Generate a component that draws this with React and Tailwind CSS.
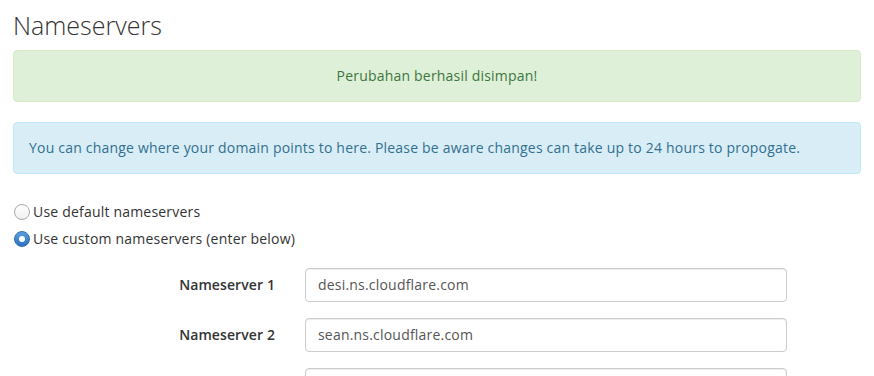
import React from "react";

function Radio({ checked }) {
  if (checked) {
    return (
      <span className="inline-flex h-[16px] w-[16px] shrink-0 items-center justify-center rounded-full border border-[#2f6fb0] bg-gradient-to-b from-[#5a9ee0] to-[#2b73c0]">
        <span className="h-[6px] w-[6px] rounded-full bg-white" />
      </span>
    );
  }
  return (
    <span className="inline-block h-[16px] w-[16px] shrink-0 rounded-full border border-[#a9a9a9] bg-gradient-to-b from-white to-[#f0f0f0]" />
  );
}

function Row({ label, value }) {
  return (
    <div className="flex items-center">
      <label className="w-[262px] text-right text-[14px] font-semibold tracking-[0.1px] text-[#333]">{label}</label>
      <div className="ml-[30px] flex h-[34px] w-[482px] items-center rounded-[4px] border border-[#ccc] bg-white px-[12px] text-[14px] tracking-[0.2px] text-[#555] shadow-[inset_0_1px_1px_rgba(0,0,0,0.075)]">
        {value}
      </div>
    </div>
  );
}

export default function App() {
  return (
    <div className="h-[376px] w-[874px] overflow-hidden bg-white px-[13px] pt-[10px] text-[14px] leading-[20px] tracking-[0.2px] text-[#333]" style={{ fontFamily: '"Open Sans", sans-serif' }}>
      <h1 className="m-0 text-[25px] font-light leading-[30px] tracking-[0px] text-[#333]" style={{ fontFamily: '"Open Sans", sans-serif' }}>
        Nameservers
      </h1>
      <div className="mt-[10px] w-[848px] rounded-[4px] border border-[#d6e9c6] bg-[#dff0d8] p-[15px] text-center text-[#3c763d]">
        Perubahan berhasil disimpan!
      </div>
      <div className="mt-[20px] w-[848px] rounded-[4px] border border-[#bce8f1] bg-[#d9edf7] p-[15px] text-[#31708f]">
        You can change where your domain points to here. Please be aware changes can take up to 24 hours to propogate.
      </div>
      <div className="mt-[28px] flex flex-col gap-[7px]">
        <div className="flex items-center gap-[3px] pl-[1px]">
          <Radio />
          <span>Use default nameservers</span>
        </div>
        <div className="flex items-center gap-[3px] pl-[1px]">
          <Radio checked />
          <span>Use custom nameservers (enter below)</span>
        </div>
      </div>
      <div className="mt-[19px] flex flex-col gap-[16px]">
        <Row label="Nameserver 1" value="desi.ns.cloudflare.com" />
        <Row label="Nameserver 2" value="sean.ns.cloudflare.com" />
        <Row label="Nameserver 3" value="" />
      </div>
    </div>
  );
}
